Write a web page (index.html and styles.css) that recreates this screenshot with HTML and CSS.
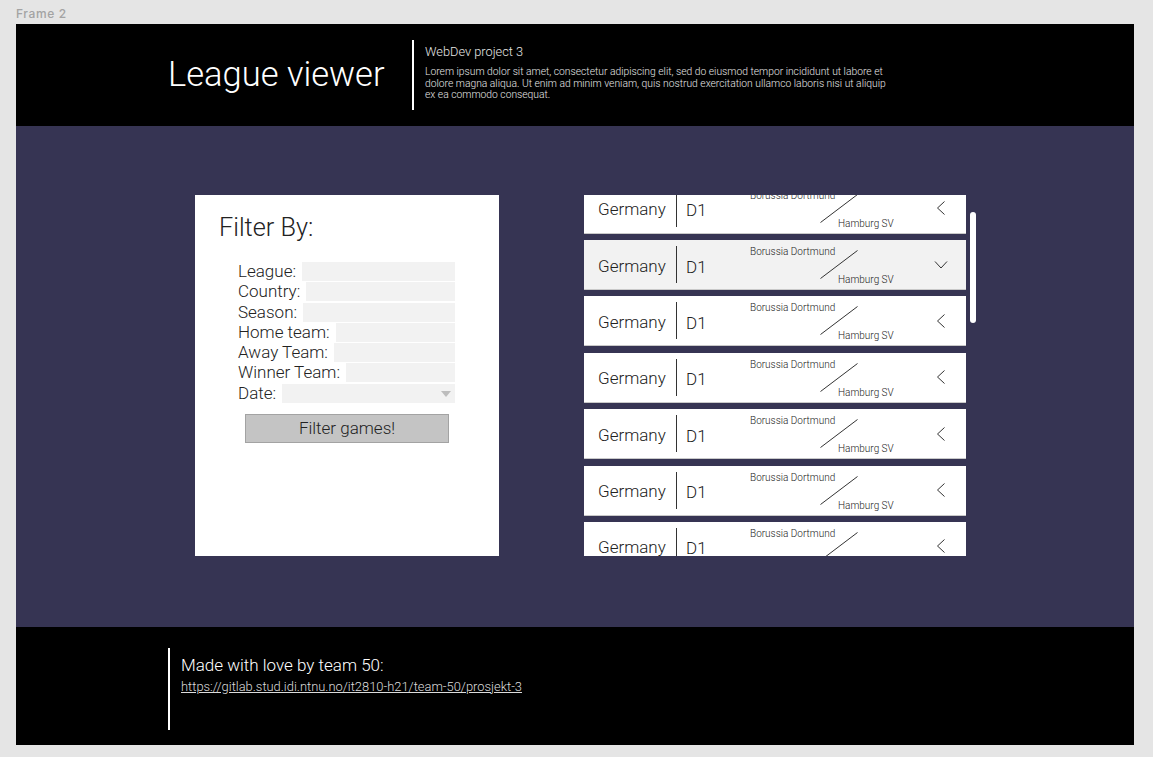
FILE: index.html
```html
<!DOCTYPE html>
<html lang="en">
<head>
<meta charset="utf-8">
<title>League viewer</title>
<link rel="stylesheet" href="styles.css">
</head>
<body>
<div class="canvas">
  <div class="frame-label">Frame 2</div>
  <div class="frame">
    <header class="header">
      <h1 class="title">League viewer</h1>
      <div class="header-line"></div>
      <div class="about">
        <div class="about-title">WebDev project 3</div>
        <p class="about-text">Lorem ipsum dolor sit amet, consectetur adipiscing elit, sed do eiusmod tempor incididunt ut labore et dolore magna aliqua. Ut enim ad minim veniam, quis nostrud exercitation ullamco laboris nisi ut aliquip ex ea commodo consequat.</p>
      </div>
    </header>

    <main class="main">
      <section class="filter">
        <h2 class="filter-title">Filter By:</h2>
        <div class="filter-form">
          <div class="row"><span class="label">League:</span><span class="input"></span></div>
          <div class="row"><span class="label">Country:</span><span class="input"></span></div>
          <div class="row"><span class="label">Season:</span><span class="input"></span></div>
          <div class="row"><span class="label">Home team:</span><span class="input"></span></div>
          <div class="row"><span class="label">Away Team:</span><span class="input"></span></div>
          <div class="row"><span class="label">Winner Team:</span><span class="input"></span></div>
          <div class="row"><span class="label">Date:</span><span class="input select"><span class="tri"></span></span></div>
        </div>
        <div class="btn-row"><button class="btn">Filter games!</button></div>
      </section>

      <div class="list-wrap">
        <div class="list">
          <div class="list-inner">
            <div class="game">
              <span class="country">Germany</span><span class="sep"></span><span class="league">D1</span>
              <div class="teams"><span class="home">Borussia Dortmund</span><svg class="slash" width="38" height="29" viewBox="0 0 38 29"><line x1="0.5" y1="28.5" x2="37.5" y2="0.5"/></svg><span class="away">Hamburg SV</span></div>
              <span class="chev"><svg width="14" height="14" viewBox="0 0 14 14"><path d="M10.5 0.5 L3.5 7 L10.5 13.5"/></svg></span>
            </div>
            <div class="game open">
              <span class="country">Germany</span><span class="sep"></span><span class="league">D1</span>
              <div class="teams"><span class="home">Borussia Dortmund</span><svg class="slash" width="38" height="29" viewBox="0 0 38 29"><line x1="0.5" y1="28.5" x2="37.5" y2="0.5"/></svg><span class="away">Hamburg SV</span></div>
              <span class="chev"><svg width="14" height="14" viewBox="0 0 14 14"><path d="M1 3.5 L7 10 L13 3.5"/></svg></span>
            </div>
            <div class="game">
              <span class="country">Germany</span><span class="sep"></span><span class="league">D1</span>
              <div class="teams"><span class="home">Borussia Dortmund</span><svg class="slash" width="38" height="29" viewBox="0 0 38 29"><line x1="0.5" y1="28.5" x2="37.5" y2="0.5"/></svg><span class="away">Hamburg SV</span></div>
              <span class="chev"><svg width="14" height="14" viewBox="0 0 14 14"><path d="M10.5 0.5 L3.5 7 L10.5 13.5"/></svg></span>
            </div>
            <div class="game">
              <span class="country">Germany</span><span class="sep"></span><span class="league">D1</span>
              <div class="teams"><span class="home">Borussia Dortmund</span><svg class="slash" width="38" height="29" viewBox="0 0 38 29"><line x1="0.5" y1="28.5" x2="37.5" y2="0.5"/></svg><span class="away">Hamburg SV</span></div>
              <span class="chev"><svg width="14" height="14" viewBox="0 0 14 14"><path d="M10.5 0.5 L3.5 7 L10.5 13.5"/></svg></span>
            </div>
            <div class="game">
              <span class="country">Germany</span><span class="sep"></span><span class="league">D1</span>
              <div class="teams"><span class="home">Borussia Dortmund</span><svg class="slash" width="38" height="29" viewBox="0 0 38 29"><line x1="0.5" y1="28.5" x2="37.5" y2="0.5"/></svg><span class="away">Hamburg SV</span></div>
              <span class="chev"><svg width="14" height="14" viewBox="0 0 14 14"><path d="M10.5 0.5 L3.5 7 L10.5 13.5"/></svg></span>
            </div>
            <div class="game">
              <span class="country">Germany</span><span class="sep"></span><span class="league">D1</span>
              <div class="teams"><span class="home">Borussia Dortmund</span><svg class="slash" width="38" height="29" viewBox="0 0 38 29"><line x1="0.5" y1="28.5" x2="37.5" y2="0.5"/></svg><span class="away">Hamburg SV</span></div>
              <span class="chev"><svg width="14" height="14" viewBox="0 0 14 14"><path d="M10.5 0.5 L3.5 7 L10.5 13.5"/></svg></span>
            </div>
            <div class="game">
              <span class="country">Germany</span><span class="sep"></span><span class="league">D1</span>
              <div class="teams"><span class="home">Borussia Dortmund</span><svg class="slash" width="38" height="29" viewBox="0 0 38 29"><line x1="0.5" y1="28.5" x2="37.5" y2="0.5"/></svg><span class="away">Hamburg SV</span></div>
              <span class="chev"><svg width="14" height="14" viewBox="0 0 14 14"><path d="M10.5 0.5 L3.5 7 L10.5 13.5"/></svg></span>
            </div>
          </div>
        </div>
        <div class="scrollbar"><div class="thumb"></div></div>
      </div>
    </main>

    <footer class="footer">
      <div class="footer-line"></div>
      <div class="credits">
        <div class="credits-title">Made with love by team 50:</div>
        <a class="credits-link" href="#">https://gitlab.stud.idi.ntnu.no/it2810-h21/team-50/prosjekt-3</a>
      </div>
    </footer>
  </div>
</div>
</body>
</html>
```

FILE: styles.css
```css
* { box-sizing: border-box; }

html, body {
  margin: 0;
  padding: 0;
}

body {
  background: #e5e5e5;
  font-family: Roboto, "Liberation Sans", sans-serif;
  font-weight: 300;
}

.canvas {
  padding: 0 19px 12px 16px;
}

.frame-label {
  height: 24px;
  padding-top: 7px;
  font-family: Inter, "Noto Sans", sans-serif;
  font-weight: 500;
  font-size: 12px;
  letter-spacing: 0.6px;
  line-height: 13px;
  color: #a3a3a3;
}

.frame {
  width: 1118px;
  height: 721px;
  display: flex;
  flex-direction: column;
}

/* Header */
.header {
  height: 102px;
  background: #000;
  display: flex;
  align-items: center;
  padding-left: 152px;
  color: #fff;
}

.title {
  margin: 0;
  font-size: 34.5px;
  font-weight: 300;
  line-height: 40px;
  width: 244px;
  padding-bottom: 2px;
}

.header-line {
  width: 2px;
  height: 70px;
  background: #fff;
  margin-right: 11px;
}

.about {
  width: 462px;
  align-self: flex-start;
  padding-top: 20px;
}

.about-title {
  font-size: 12.8px;
  line-height: 15px;
  color: #e6e6e6;
}

.about-text {
  margin: 7px 0 0;
  font-size: 10.3px;
  line-height: 11.5px;
  color: #e6e6e6;
}

/* Main */
.main {
  height: 501px;
  background: #363453;
  display: flex;
  align-items: flex-start;
  padding: 69px 0 0 179px;
  gap: 85px;
}

.filter {
  width: 304px;
  height: 361px;
  background: #fff;
  padding: 18px 44px 0 24px;
  color: #222;
}

.filter-title {
  margin: 0;
  font-size: 25.3px;
  font-weight: 300;
  line-height: 30px;
}

.filter-form {
  margin-top: 19px;
  padding-left: 19px;
  display: flex;
  flex-direction: column;
  gap: 1.3px;
}

.row {
  display: flex;
  align-items: center;
  gap: 6px;
  height: 19px;
}

.label {
  font-size: 17px;
  line-height: 19px;
  white-space: nowrap;
}

.input {
  flex: 1;
  height: 19px;
  background: #f2f2f2;
}

.select {
  display: flex;
  align-items: center;
  justify-content: flex-end;
  padding-right: 4px;
}

.tri {
  width: 0;
  height: 0;
  border-left: 5px solid transparent;
  border-right: 5px solid transparent;
  border-top: 6px solid #bdbdbd;
  margin-top: 2px;
}

.btn-row {
  display: flex;
  justify-content: center;
  margin: 11px -44px 0 -24px;
}

.btn {
  width: 204px;
  height: 29px;
  background: #c4c4c4;
  border: 1px solid #a3a3a3;
  font-family: Roboto, "Liberation Sans", sans-serif;
  font-weight: 300;
  font-size: 17px;
  color: #222;
  padding: 0 0 1px;
}

/* Game list */
.list-wrap {
  display: flex;
  gap: 4px;
}

.list {
  width: 382px;
  height: 361px;
  overflow: hidden;
}

.list-inner {
  margin-top: -11.4px;
  display: flex;
  flex-direction: column;
  gap: 6.4px;
}

.game {
  height: 50px;
  background: #fff;
  border-bottom: 1px solid #c9c9c9;
  display: flex;
  align-items: center;
  color: #222;
  flex-shrink: 0;
}

.game.open {
  background: #f2f2f2;
}

.country {
  width: 92px;
  padding-left: 14px;
  padding-top: 2px;
  font-size: 17px;
  line-height: 20px;
}

.sep {
  width: 1px;
  height: 37px;
  background: #333;
}

.league {
  width: 73px;
  padding-left: 9px;
  padding-top: 4px;
  font-size: 17px;
  line-height: 20px;
}

.teams {
  position: relative;
  width: 140px;
  height: 49px;
  display: flex;
  flex-direction: column;
  align-items: flex-start;
  padding-top: 6px;
  font-size: 10px;
  line-height: 12px;
  font-weight: 300;
  color: #222;
}

.home {
  white-space: nowrap;
}

.away {
  margin-top: 16px;
  margin-left: 88px;
  white-space: nowrap;
}

.slash {
  position: absolute;
  left: 70px;
  top: 10px;
}

.slash line {
  stroke: #333;
  stroke-width: 1;
}

.chev {
  margin-left: auto;
  margin-right: 18px;
  width: 14px;
  height: 14px;
  display: flex;
}

.chev path {
  fill: none;
  stroke: #333;
  stroke-width: 1;
}

.scrollbar {
  width: 6px;
  padding-top: 17px;
}

.thumb {
  width: 6px;
  height: 111px;
  background: #fff;
  border-radius: 3px;
}

/* Footer */
.footer {
  flex: 1;
  background: #000;
  display: flex;
  align-items: flex-start;
  padding: 21px 0 0 152px;
  color: #fff;
}

.footer-line {
  width: 2px;
  height: 82px;
  background: #fff;
  margin-right: 11px;
}

.credits {
  padding-top: 7px;
}

.credits-title {
  font-size: 17px;
  line-height: 21px;
}

.credits-link {
  display: block;
  margin-top: 3px;
  font-size: 12.9px;
  line-height: 16px;
  color: #dcdcdc;
  text-decoration: underline;
}
```
